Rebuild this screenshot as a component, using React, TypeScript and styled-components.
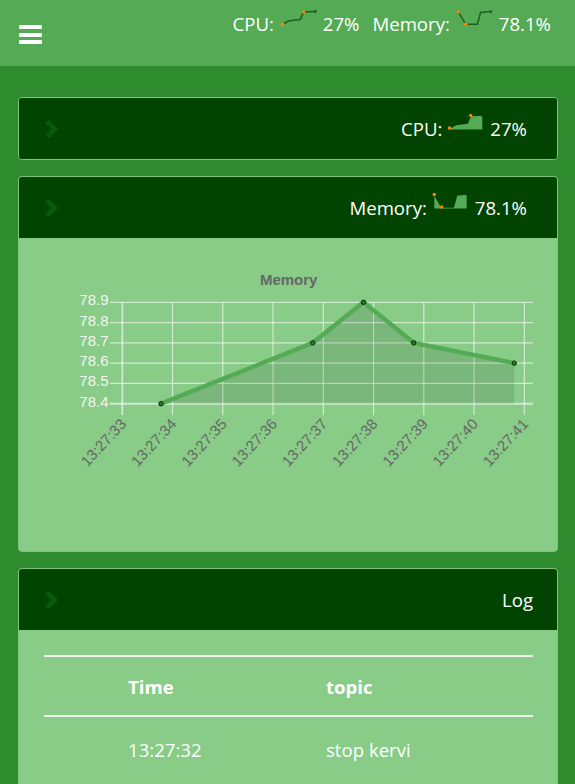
import React from "react";
import styled, { createGlobalStyle } from "styled-components";

const GlobalStyle = createGlobalStyle`
  html, body { margin: 0; padding: 0; background: #2e8b2e; }
  body { font-family: "Open Sans", "Noto Sans", sans-serif; color: #fff; }
  * { box-sizing: border-box; }
`;

const Page = styled.div`
  min-height: 784px;
  background: #2e8b2e;
`;

const TopBar = styled.header`
  height: 66px;
  background: #55aa55;
  display: flex;
  align-items: flex-start;
  justify-content: space-between;
  padding: 0 24px 0 19px;
`;

const Menu = styled.div`
  margin-top: 25px;
  display: flex;
  flex-direction: column;
  gap: 3.5px;
`;

const MenuBar = styled.span`
  display: block;
  width: 23px;
  height: 4px;
  background: #fff;
  border-radius: 1px;
`;

const TopStats = styled.div`
  display: flex;
  align-items: flex-start;
  padding-top: 12px;
  font-size: 18.6px;
  line-height: 24px;
`;

const TopStat = styled.div`
  display: flex;
  align-items: flex-start;
  & + & { margin-left: 13px; }
`;

const TopSpark = styled.div`
  margin: -3px 5px 0 6px;
  display: flex;
`;

const Main = styled.main`
  padding: 31px 17px 0 18px;
  display: flex;
  flex-direction: column;
  gap: 16px;
`;

const Card = styled.section`
  border: 1px solid #7cc47c;
  border-radius: 4px;
  overflow: hidden;
  background: #88cc88;
`;

const CardHeader = styled.div`
  height: 61px;
  background: #004400;
  display: flex;
  align-items: center;
  justify-content: space-between;
  padding: 0 24px 0 25px;
`;

const CardTitle = styled.div<{ $shift?: number }>`
  display: flex;
  align-items: center;
  font-size: 18.6px;
  line-height: 24px;
  margin-right: ${(p) => p.$shift ?? 0}px;
`;

const CardSpark = styled.div`
  display: flex;
  margin: 0 5px 13px 5px;
`;

const CardBody = styled.div<{ $height: number }>`
  height: ${(p) => p.$height}px;
  background: #88cc88;
`;

const ChartSvg = styled.svg`
  display: block;
`;

const TableWrap = styled.div`
  padding: 25px 24px 0 25px;
`;

const TableHead = styled.div`
  display: grid;
  grid-template-columns: 84px 198px 1fr;
  align-items: center;
  height: 62px;
  border-top: 2px solid #eef6ee;
  border-bottom: 2px solid #eef6ee;
  font-weight: 700;
  font-size: 18.6px;
`;

const TableRow = styled.div`
  display: grid;
  grid-template-columns: 84px 198px 1fr;
  align-items: center;
  height: 64px;
  font-size: 18.6px;
`;

const Cell = styled.span``;

const Chevron = () => (
  <svg width="15" height="20" viewBox="0 0 15 20">
    <polyline points="3,2.5 10.8,10 3,17.5" fill="none" stroke="#0b5a0b" strokeWidth="4.6" strokeLinejoin="miter" />
  </svg>
);

type SparkProps = {
  xs: number[];
  vs: number[];
  spots: number[];
  variant: "line" | "fill";
};

const Sparkline = ({ xs, vs, spots, variant }: SparkProps) => {
  const top = variant === "fill" ? 1 : 2.5;
  const bottom = variant === "fill" ? 14 : 15.3;
  const pts = xs.map((x, i) => [x, bottom - vs[i] * (bottom - top)]);
  const line = pts.map((p) => p.join(",")).join(" ");
  const last = pts[pts.length - 1];
  const lineColor = variant === "fill" ? "#004400" : "#1f611f";
  return (
    <svg width="38" height="16" viewBox="0 0 38 16" style={{ overflow: "visible" }}>
      {variant === "fill" && (
        <polygon
          points={`${pts[0][0]},15.5 ${line} ${last[0]},15.5`}
          fill="#55aa55"
        />
      )}
      <polyline points={line} fill="none" stroke={lineColor} strokeWidth="1.6" />
      {spots.map((i) => (
        <circle key={i} cx={pts[i][0]} cy={pts[i][1]} r="1.7" fill="#ff8800" />
      ))}
      <circle cx={last[0]} cy={last[1]} r="1.6" fill={lineColor} />
    </svg>
  );
};

const cpuSpark = { xs: [2.5, 9.3, 20.2, 23.7, 35.3], vs: [0, 0.28, 0.38, 0.97, 1], spots: [0, 3] };
const memSpark = { xs: [2.3, 9.7, 21.3, 24.7, 34.7], vs: [0.97, 0, 0, 0.92, 1], spots: [0, 1] };

// chart geometry (page coordinates)
const X0 = 122.3;
const XS = 50.25;
const YTOP = 302.3;
const YBOT = 403.7;
const yOf = (v: number) => YBOT - ((v - 78.4) / 0.5) * (YBOT - YTOP);
const xOf = (t: number) => X0 + (t - 33) * XS;
const data: [number, number][] = [
  [33.77, 78.4],
  [36.79, 78.7],
  [37.8, 78.9],
  [38.8, 78.7],
  [40.8, 78.6],
];
const yTicks = [78.9, 78.8, 78.7, 78.6, 78.5, 78.4];
const xTicks = [33, 34, 35, 36, 37, 38, 39, 40, 41];

const MemoryChart = () => {
  const pts = data.map(([t, v]) => [xOf(t), yOf(v)]);
  const line = pts.map((p) => p.join(",")).join(" ");
  const area = `${pts[0][0]},${YBOT} ${line} ${pts[pts.length - 1][0]},${YBOT}`;
  return (
    <ChartSvg width="538" height="313" viewBox="0 0 538 313">
      <g transform="translate(-19,-238)" fontFamily="'Liberation Sans', Arial, sans-serif">
        <text x="288.7" y="281" textAnchor="middle" dominantBaseline="middle" fontSize="15" fontWeight="700" fill="#666">
          Memory
        </text>
        {yTicks.map((v) => (
          <g key={v}>
            <line x1="110" x2="533" y1={yOf(v)} y2={yOf(v)} stroke="rgba(255,255,255,0.6)" strokeWidth={v === 78.4 ? 2 : 1.2} />
            <text x="108.5" y={yOf(v) - 1} textAnchor="end" dominantBaseline="middle" fontSize="15" fill="#f4f4f4">
              {v.toFixed(1)}
            </text>
          </g>
        ))}
        {xTicks.map((t) => (
          <g key={t}>
            <line x1={xOf(t)} x2={xOf(t)} y1={YTOP} y2="415" stroke="rgba(255,255,255,0.6)" strokeWidth={t === 33 ? 1.8 : 1.2} />
            <text
              x={xOf(t) + 2}
              y="422"
              textAnchor="end"
              dominantBaseline="middle"
              fontSize="15"
              fill="#666"
              transform={`rotate(-47 ${xOf(t) + 2} 422)`}
            >
              {`13:27:${t}`}
            </text>
          </g>
        ))}
        <polygon points={area} fill="rgba(0,0,0,0.1)" />
        <polyline points={line} fill="none" stroke="#55aa55" strokeWidth="4.5" strokeLinejoin="round" />
        {pts.map((p, i) => (
          <circle key={i} cx={p[0]} cy={p[1]} r="2.2" fill="#2a7a2a" stroke="#0a2a0a" strokeWidth="1" />
        ))}
      </g>
    </ChartSvg>
  );
};

export default function App() {
  return (
    <Page>
      <GlobalStyle />
      <TopBar>
        <Menu>
          <MenuBar />
          <MenuBar />
          <MenuBar />
        </Menu>
        <TopStats>
          <TopStat>
            <span>CPU:</span>
            <TopSpark>
              <Sparkline {...cpuSpark} variant="line" />
            </TopSpark>
            <span>27%</span>
          </TopStat>
          <TopStat>
            <span>Memory:</span>
            <TopSpark>
              <Sparkline {...memSpark} variant="line" />
            </TopSpark>
            <span>78.1%</span>
          </TopStat>
        </TopStats>
      </TopBar>
      <Main>
        <Card>
          <CardHeader>
            <Chevron />
            <CardTitle $shift={6}>
              <span>CPU:</span>
              <CardSpark>
                <Sparkline {...cpuSpark} variant="fill" />
              </CardSpark>
              <span>27%</span>
            </CardTitle>
          </CardHeader>
        </Card>
        <Card>
          <CardHeader>
            <Chevron />
            <CardTitle $shift={6}>
              <span>Memory:</span>
              <CardSpark>
                <Sparkline {...memSpark} variant="fill" />
              </CardSpark>
              <span>78.1%</span>
            </CardTitle>
          </CardHeader>
          <CardBody $height={313}>
            <MemoryChart />
          </CardBody>
        </Card>
        <Card>
          <CardHeader>
            <Chevron />
            <CardTitle>Log</CardTitle>
          </CardHeader>
          <CardBody $height={200}>
            <TableWrap>
              <TableHead>
                <Cell />
                <Cell>Time</Cell>
                <Cell>topic</Cell>
              </TableHead>
              <TableRow>
                <Cell />
                <Cell>13:27:32</Cell>
                <Cell>stop kervi</Cell>
              </TableRow>
            </TableWrap>
          </CardBody>
        </Card>
      </Main>
    </Page>
  );
}
